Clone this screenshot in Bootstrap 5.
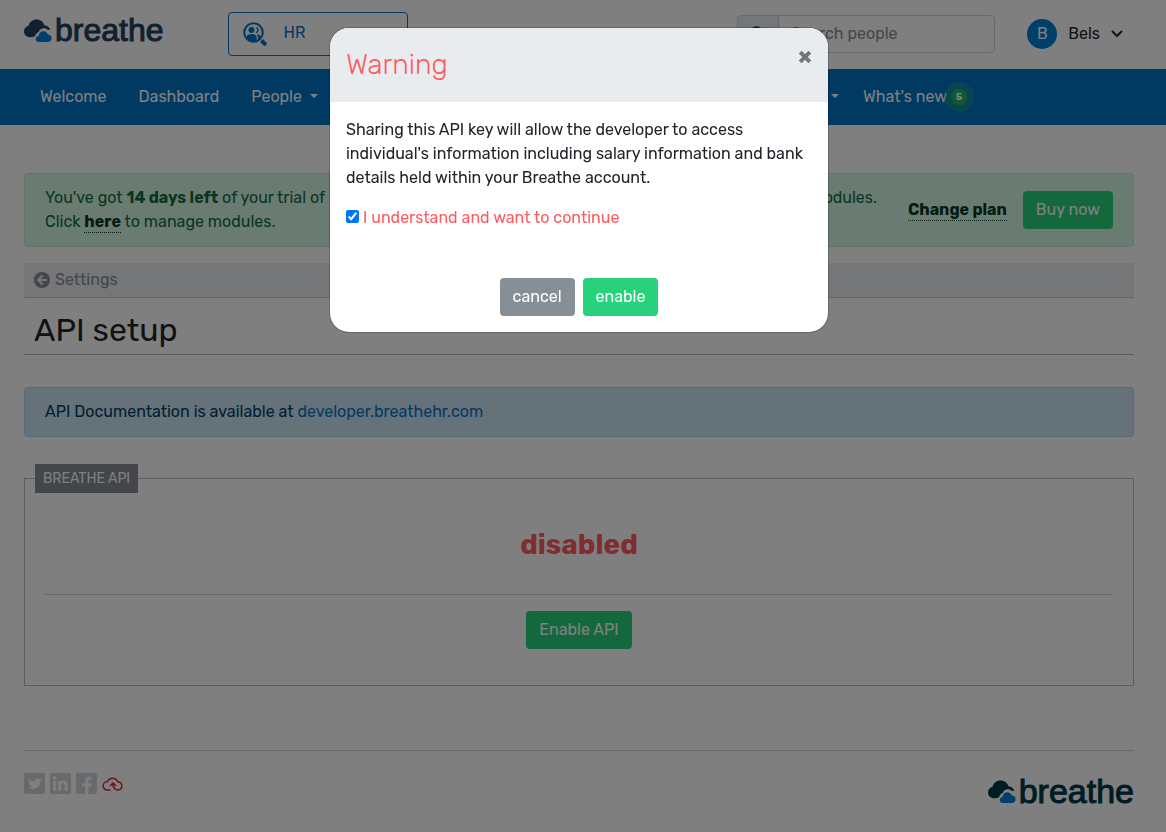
<!DOCTYPE html>
<html lang="en">
<head>
<meta charset="utf-8">
<meta name="viewport" content="width=device-width, initial-scale=1">
<title>API setup - Breathe</title>
<link href="https://cdn.jsdelivr.net/npm/bootstrap@5.3.0/dist/css/bootstrap.min.css" rel="stylesheet">
<style>
  :root { --brand: #0075c9; --go: #28d17c; --danger-soft: #ff5a5f; --grey: #868e96; }
  body { font-family: Rubik, Inter, "Open Sans", sans-serif; font-size: 16px; line-height: 24px; color: #212529; }
  .page-pad { padding-left: 24px; padding-right: 32px; }
  .btn { border-radius: 4px; font-weight: 400; padding: 6px 12px; }
  .btn-go, .btn-go:hover { background: var(--go); color: #fff; }
  .btn-grey, .btn-grey:hover { background: var(--grey); color: #fff; }

  .wordmark { color: #24405f; text-decoration: none; font: 400 32px/40px "Liberation Sans", sans-serif; -webkit-text-stroke: 1px currentColor; gap: 3px; }
  .wordmark svg { width: 28px; height: 25px; }
  .top-bar .wordmark { margin-bottom: 8px; }
  .wordmark-foot { color: #003846; font-size: 34px; }

  .top-bar { height: 69px; padding-right: 43px; padding-bottom: 1px; }
  .module-picker { width: 180px; height: 44px; margin-left: 64px; padding: 0 14px; gap: 17px; border: 1px solid var(--brand); border-radius: 4px; }
  .module-picker select { appearance: none; border: 0; background: none; color: var(--brand); outline: 0; padding: 0; margin-bottom: 3px; }
  .people-search { width: 258px; height: 38px; }
  .people-search .input-group-text { width: 42px; background: #e9ecef; border-color: #ced4da; border-radius: 4px; }
  .people-search .form-control { border-color: #ced4da; border-radius: 4px; }
  .people-search .form-control::placeholder { color: #868e96; }
  .account { gap: 11px; margin-left: 32px; color: #212529; }
  .avatar { width: 30px; height: 30px; border-radius: 50%; background: #007ed4; color: #fff; }

  .main-nav { background: #0075c6; height: 56px; padding-left: 24px; padding-right: 32px; }
  .main-nav .nav-link { color: #fff; padding: 8px 16px; }
  .main-nav .nav-link.more-link { padding-right: 8px; }
  .nav-lead { width: 823px; }
  .dropdown-toggle::after { margin-left: 8px; }
  .news-count { width: 16px; height: 16px; border-radius: 50%; background: #28b463; box-shadow: 0 0 0 7px rgba(40, 180, 99, .35); font-size: 10px; line-height: 16px; }

  .trial { background: #d4f6e5; border: 1px solid #b8eed3; border-radius: 4px; color: #156d40; padding: 12px 20px; margin-top: 48px; gap: 31px; }
  .dotted-link { color: #083a20; font-weight: 700; text-decoration: none; border-bottom: 1px dotted; line-height: 20px; display: inline-block; }
  .trial strong { font-weight: 700; }
  .crumb { background: #e9ecef; border-bottom: 1px dotted #adb5bd; height: 35px; padding: 0 10px; margin-top: 16px; }
  .crumb a { color: var(--grey); text-decoration: none; gap: 5px; }
  .page-title { font-size: 32px; line-height: 40px; font-weight: 400; padding: 12px 10px 4px; border-bottom: 1px solid #b9bcbf; margin: 0; }
  .doc-note { background: #cce4f4; border: 1px solid #b0d4ee; border-radius: 4px; color: #003d66; padding: 12px 20px; margin: 32px 0 27px; }
  .doc-note a { color: #0075c6; text-decoration: none; }
  .api-box { border: 1px solid #b9bcbf; padding: 0 20px 36px; }
  .api-box legend { float: none; width: auto; margin: 0 auto 36px -10px; padding: 4px 8px; background: var(--grey); color: #fff; font-size: 14px; line-height: 21px; font-weight: 400; }
  .api-state { color: var(--danger-soft); font-size: 28px; line-height: 32px; font-weight: 700; margin: 0 0 33px; }
  .api-box hr, .foot { border-top: 1px solid #d0d1d2; opacity: 1; }
  .foot { margin-top: 64px; padding-top: 20px; margin-bottom: 16px; }
  .social { gap: 4px; padding-top: 2px; }
  .social svg { width: 22px; height: 22px; display: block; }

  .modal { padding-right: 8px; }
  .modal-dialog { margin-top: 28px; margin-bottom: 28px; }
  .modal-content { border-radius: 20px; border-color: rgba(0, 0, 0, .2); overflow: hidden; background-clip: padding-box; margin-top: -1px; }
  .modal-header { background: #e9ecef; border: 0; border-radius: 0; padding: 16px; align-items: flex-start; }
  .modal-title { color: var(--danger-soft); font-size: 28px; line-height: 42px; font-weight: 300; }
  .close-x { border: 0; background: none; padding: 4px 0 0; line-height: 1; }
  .confirm { accent-color: #0075ff; width: 13px; height: 13px; margin: 0 0 3px; }
  .confirm-row { gap: 4px; color: var(--danger-soft); }
</style>
</head>
<body class="modal-open overflow-hidden">

<svg class="d-none" aria-hidden="true">
  <symbol id="clouds" viewBox="0 0 29 25">
    <path fill="currentColor" d="M6.500 19.500C2.800 19.500 0 17 0 13.500 0 10.500 2 8.300 4.800 7.700 5.300 3.800 8.900 1 13 1c4 0 7.200 2.400 8.100 6 3.100.2 5.600 2.300 6.100 5.200-1-.5-2-.6-2.900-.4C23 10.300 21.300 10 19.700 10.200c-2.200.3-3.900 1.900-4.400 3.800-1.900.6-3.400 2.200-3.700 4.200-1.400.8-3.200 1.300-5.100 1.300z"/>
    <path fill="#0082d6" d="M15.500 24.500c-2 0-3.400-1.300-3.400-3.100 0-1.700 1.200-3 3-3.200.2-3 2.300-5 5-5 2.300 0 4.100 1.300 4.700 3.400 2.200 0 3.800 1.700 3.800 3.900 0 2.300-1.700 4-4 4z"/>
  </symbol>
</svg>

<header class="top-bar page-pad d-flex align-items-center">
  <a class="wordmark d-flex align-items-center" href="#"><svg aria-hidden="true"><use href="#clouds"/></svg>breathe</a>
  <label class="module-picker d-flex align-items-center">
    <svg width="24" height="24" viewBox="0 0 24 24" aria-hidden="true">
      <circle cx="10.500" cy="10.500" r="9.300" fill="none" stroke="#0075c9" stroke-width="2"/>
      <circle cx="8.500" cy="8" r="3" fill="#0075c9"/>
      <path d="M12.600 5a3.100 3.100 0 0 1 0 6.200 4.600 4.600 0 0 0 0-6.200z" fill="#0075c9"/>
      <path d="M3 15c1-2.300 3.200-3 5.700-3s4.600 1 5 3.400v3.500A8.500 8.500 0 0 1 3 15zM13.500 12.300c2.300 0 4 1 4.600 2.300-.6 1.500-1.600 2.700-2.900 3.500.1-2.500-.4-4.500-1.700-5.800z" fill="#0075c9"/>
      <path d="M18.500 18.500l4.500 4.500" stroke="#0075c9" stroke-width="4"/>
    </svg>
    <select aria-label="Module"><option>HR</option></select>
  </label>
  <form class="people-search input-group ms-auto flex-nowrap">
    <label class="input-group-text justify-content-center" for="people">
      <svg width="16" height="16" viewBox="0 0 16 16" aria-hidden="true"><circle cx="6.500" cy="6.500" r="5" fill="none" stroke="#343a40" stroke-width="2.500"/><path d="M10 10l5 5" stroke="#343a40" stroke-width="3"/></svg>
    </label>
    <input class="form-control" id="people" type="search" placeholder="Search people">
  </form>
  <button class="account btn p-0 border-0 d-flex align-items-center" type="button">
    <span class="avatar d-flex align-items-center justify-content-center">B</span>Bels
    <svg width="12" height="8" viewBox="0 0 12 8" fill="none" stroke="#212529" stroke-width="2" aria-hidden="true"><path d="M1 1l5 5 5-5"/></svg>
  </button>
</header>

<nav class="main-nav d-flex align-items-center" aria-label="Main">
  <ul class="nav nav-lead flex-nowrap flex-shrink-0">
    <li class="nav-item"><a class="nav-link" href="#">Welcome</a></li>
    <li class="nav-item"><a class="nav-link" href="#">Dashboard</a></li>
    <li class="nav-item"><a class="nav-link dropdown-toggle" href="#">People</a></li>
    <li class="nav-item ms-auto"><a class="nav-link more-link dropdown-toggle" href="#" aria-label="More"></a></li>
  </ul>
  <ul class="nav flex-nowrap">
    <li class="nav-item"><a class="nav-link d-flex align-items-center gap-1 text-nowrap" href="#">What's new<span class="news-count text-center fw-bold">5</span></a></li>
  </ul>
</nav>

<main class="page-pad">
  <div class="trial d-flex align-items-center">
    <div class="flex-grow-1">
      <div class="d-flex justify-content-between"><span>You've got <strong>14 days left</strong> of your trial of</span><span>modules.</span></div>
      Click <a class="dotted-link" href="#">here</a> to manage modules.
    </div>
    <div class="d-flex align-items-center gap-3 text-nowrap">
      <a class="dotted-link" href="#">Change plan</a>
      <button class="btn btn-go" type="button">Buy now</button>
    </div>
  </div>

  <div class="crumb d-flex align-items-center">
    <a class="d-flex align-items-center" href="#">
      <svg width="16" height="16" viewBox="0 0 16 16" aria-hidden="true"><circle cx="8" cy="8" r="8" fill="#868e96"/><path d="M8.500 3.500L4 8l4.500 4.500M4.500 8H13" stroke="#e9ecef" stroke-width="2" fill="none"/></svg>Settings</a>
  </div>
  <h1 class="page-title">API setup</h1>

  <div class="doc-note">API Documentation is available at <a href="#">developer.breathehr.com</a></div>

  <fieldset class="api-box text-center">
    <legend>BREATHE API</legend>
    <p class="api-state">disabled</p>
    <hr class="my-3">
    <button class="btn btn-go" type="button">Enable API</button>
  </fieldset>

  <footer class="foot d-flex justify-content-between align-items-start">
    <div class="social d-flex">
      <a href="#" aria-label="Twitter"><svg viewBox="0 0 22 22"><rect width="21" height="21" rx="2" fill="#ced4da"/><path fill="#fff" d="M17.800 6.300c-.5.200-1 .4-1.600.5.600-.4 1-.9 1.200-1.500-.5.300-1.100.5-1.800.7a2.800 2.800 0 0 0-4.800 2.500C8.500 8.400 6.400 7.300 5 5.500c-.8 1.300-.4 2.900.8 3.700-.4 0-.9-.1-1.200-.3 0 1.400.9 2.500 2.200 2.800-.4.100-.8.100-1.300 0 .4 1.100 1.400 1.900 2.600 2-1.200.9-2.600 1.300-4.100 1.100 5.400 3.300 12.500.3 12.400-7 .6-.4 1-.9 1.400-1.500z"/></svg></a>
      <a href="#" aria-label="LinkedIn"><svg viewBox="0 0 22 22"><rect width="21" height="21" rx="2" fill="#ced4da"/><circle cx="4.700" cy="4.900" r="1.700" fill="#fff"/><path fill="#fff" d="M3.200 8h3v9.800h-3zM8.200 8h2.900v1.400c.6-1 1.600-1.700 3-1.700 2.900 0 3.600 1.900 3.600 4.500v5.600h-3v-5c0-1.300-.1-2.700-1.700-2.700s-1.800 1.300-1.800 2.600v5.100h-3z"/></svg></a>
      <a href="#" aria-label="Facebook"><svg viewBox="0 0 22 22"><rect width="21" height="21" rx="2" fill="#ced4da"/><path fill="#fff" d="M9 21v-7.500H6.200v-3.100H9V8c0-2.800 1.600-4.300 4.100-4.300 1.200 0 2.500.2 2.500.2v2.700h-1.400c-1.400 0-1.800.9-1.800 1.700v2.100h3.100l-.5 3.100h-2.600V21z"/></svg></a>
      <a href="#" aria-label="Cloud"><svg viewBox="0 0 22 22" fill="none" stroke="#f01e28" stroke-width="1.500"><path d="M8.500 17H5.500a4.200 4.200 0 0 1-.3-8.400C6.300 6.700 8 5.200 10.500 5.200s4.300 1.500 5.200 3.500A4.200 4.200 0 0 1 16.500 17c-3 0-5.500-1.500-5.500-6M8 13l3-3 3 3"/></svg></a>
    </div>
    <a class="wordmark wordmark-foot d-flex align-items-center" href="#"><svg aria-hidden="true"><use href="#clouds"/></svg>breathe</a>
  </footer>
</main>

<div class="modal show d-block" tabindex="-1" role="dialog" aria-modal="true" aria-labelledby="warn">
  <div class="modal-dialog">
    <div class="modal-content">
      <div class="modal-header justify-content-between">
        <h2 class="modal-title" id="warn">Warning</h2>
        <button class="close-x" type="button" aria-label="Close"><svg width="14" height="14" viewBox="0 0 14 14" aria-hidden="true"><path d="M2.200 2.200l9.600 9.600M11.800 2.200l-9.600 9.600" stroke="#747678" stroke-width="4"/></svg></button>
      </div>
      <div class="modal-body p-3">
        <p class="mb-3">Sharing this API key will allow the developer to access individual's information including salary information and bank details held within your Breathe account.</p>
        <label class="confirm-row d-flex align-items-center mb-3"><input class="confirm" type="checkbox" checked>I understand and want to continue</label>
      </div>
      <div class="modal-footer d-flex justify-content-center border-0 p-3 gap-2">
        <button class="btn btn-grey m-0" type="button">cancel</button>
        <button class="btn btn-go m-0" type="button">enable</button>
      </div>
    </div>
  </div>
</div>
<div class="modal-backdrop show"></div>

<script src="https://cdn.jsdelivr.net/npm/bootstrap@5.3.0/dist/js/bootstrap.bundle.min.js"></script>
</body>
</html>
